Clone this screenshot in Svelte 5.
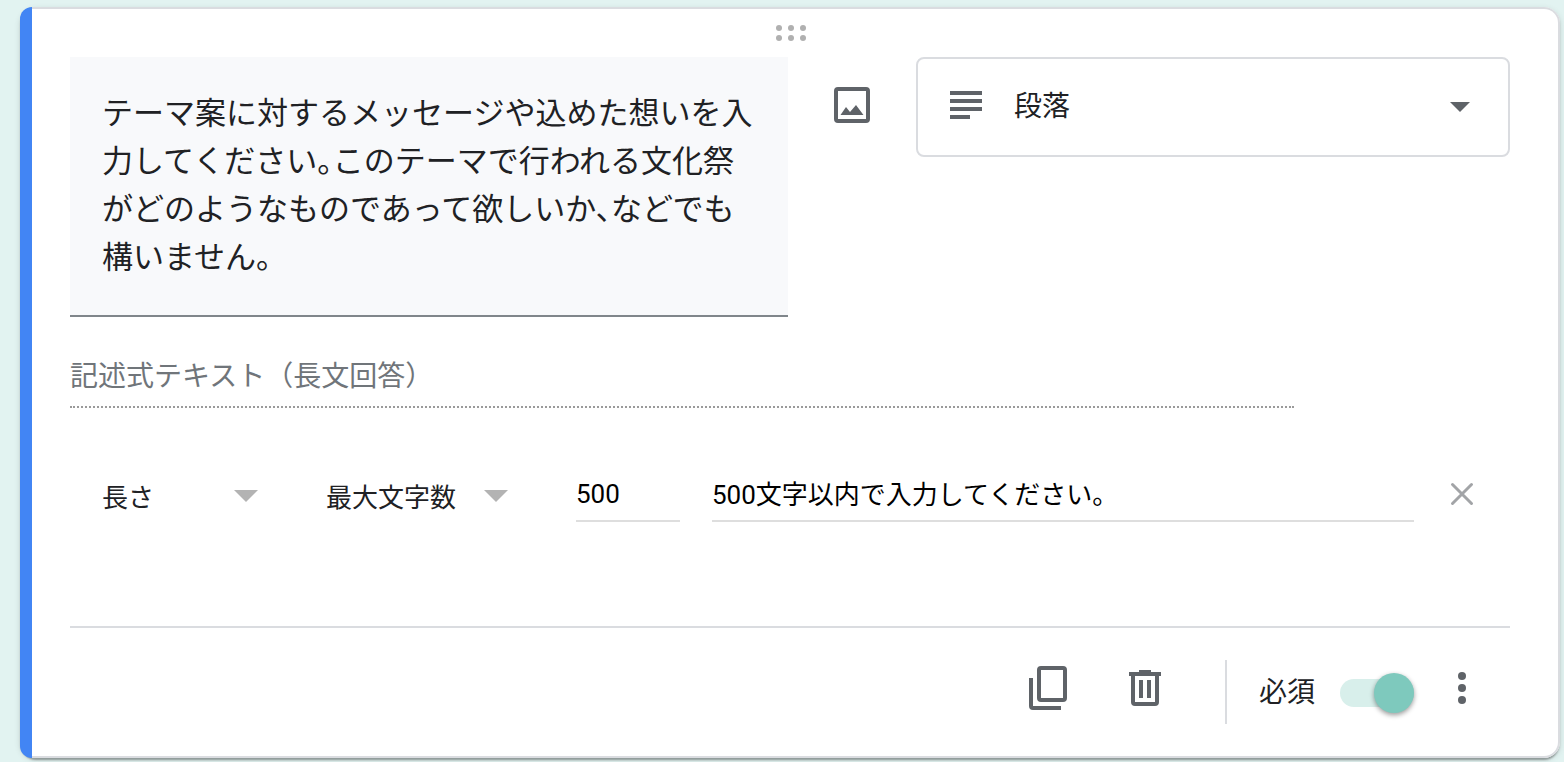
<script>
  let question = $state(
    'テーマ案に対するメッセージや込めた想いを入力してください。このテーマで行われる文化祭がどのようなものであって欲しいか、などでも構いません。'
  );
  let limit = $state('500');
  let errorText = $state('500文字以内で入力してください。');
  let required = $state(true);
</script>

<main>
  <section class="card" aria-label="質問">
    <div class="accent"></div>
    <div class="body">
      <div class="drag">
        <svg width="32" height="16" viewBox="0 0 32 16" fill="#b0b0b0" aria-hidden="true">
          <circle cx="5" cy="3" r="3" /><circle cx="17" cy="3" r="3" /><circle cx="29" cy="3" r="3" />
          <circle cx="5" cy="13" r="3" /><circle cx="17" cy="13" r="3" /><circle cx="29" cy="13" r="3" />
        </svg>
      </div>

      <div class="question-row">
        <textarea class="question" aria-label="質問文" bind:value={question}></textarea>
        <button class="icon-button image-button" aria-label="画像を追加">
          <svg width="48" height="48" viewBox="0 0 48 48" aria-hidden="true">
            <rect x="8" y="8" width="32" height="32" rx="2" fill="none" stroke="#5f6368" stroke-width="4" />
            <path d="M12.500 34 18 26l4 5 6-7 7.500 10z" fill="#5f6368" />
          </svg>
        </button>
        <div class="type">
          <svg class="type-icon" width="32" height="28" viewBox="0 0 32 28" fill="#5f6368" aria-hidden="true">
            <path d="M0 0h32v4H0zM0 8h32v4H0zM0 16h32v4H0zM0 24h20v4H0z" />
          </svg>
          <select aria-label="質問の形式">
            <option>段落</option>
          </select>
          <svg class="caret" width="20" height="10" viewBox="0 0 20 10" aria-hidden="true">
            <path d="M0 0h20L10 10z" fill="#5f6368" />
          </svg>
        </div>
      </div>

      <input class="answer" aria-label="回答" value="記述式テキスト（長文回答）" disabled />

      <div class="validation">
        <div class="picker kind">
          <select aria-label="検証の種類">
            <option>長さ</option>
          </select>
          <svg class="caret" width="24" height="12" viewBox="0 0 24 12" aria-hidden="true">
            <path d="M0 0h24L12 12z" fill="#b3b3b3" />
          </svg>
        </div>
        <div class="picker rule">
          <select aria-label="検証の条件">
            <option>最大文字数</option>
          </select>
          <svg class="caret" width="24" height="12" viewBox="0 0 24 12" aria-hidden="true">
            <path d="M0 0h24L12 12z" fill="#b3b3b3" />
          </svg>
        </div>
        <input class="limit" aria-label="数値" bind:value={limit} />
        <input class="message" aria-label="エラーメッセージ" bind:value={errorText} />
        <button class="icon-button" aria-label="検証を削除">
          <svg width="48" height="48" viewBox="0 0 48 48" aria-hidden="true">
            <path d="M14.500 13.500l19 19M33.500 13.500l-19 19" stroke="#a2a4a7" stroke-width="3" stroke-linecap="round" />
          </svg>
        </button>
      </div>

      <footer>
        <div class="actions">
          <button class="icon-button" aria-label="コピーを作成">
            <svg width="48" height="48" viewBox="0 0 48 48" fill="none" stroke="#5f6368" stroke-width="4" aria-hidden="true">
              <rect x="14" y="4" width="26" height="32" rx="2" />
              <path d="M6 14v28q0 2 2 2h28" />
            </svg>
          </button>
          <button class="icon-button" aria-label="削除">
            <svg width="48" height="48" viewBox="0 0 48 48" fill="#5f6368" aria-hidden="true">
              <path d="M18 6h12v2h10v4H8V8h10zM18 16h4v18h-4zM26 16h4v18h-4z" />
              <path d="M12 11v27q0 2 2 2h20q2 0 2-2V11" fill="none" stroke="#5f6368" stroke-width="4" />
            </svg>
          </button>
        </div>
        <div class="separator"></div>
        <label class="required">
          <span>必須</span>
          <input type="checkbox" role="switch" bind:checked={required} />
        </label>
        <div class="actions">
          <button class="icon-button" aria-label="その他のオプション">
            <svg width="48" height="48" viewBox="0 0 48 48" fill="#5f6368" aria-hidden="true">
              <circle cx="24" cy="12" r="4" /><circle cx="24" cy="24" r="4" /><circle cx="24" cy="36" r="4" />
            </svg>
          </button>
        </div>
      </footer>
    </div>
  </section>
</main>

<style>
  :global(body) {
    background: #e2f3f1;
  }

  main {
    padding: 7px 4px 4px 20px;
    font-family: Roboto, 'Noto Sans CJK JP', sans-serif;
    color: #202124;
  }

  main * {
    box-sizing: border-box;
  }

  .card {
    display: flex;
    border-radius: 16px;
    background: #fff;
    box-shadow:
      0 4px 2px -2px rgba(0, 0, 0, 0.2),
      0 2px 2px 0 rgba(0, 0, 0, 0.14),
      0 2px 6px 0 rgba(0, 0, 0, 0.12);
  }

  .accent {
    flex: none;
    width: 12px;
    border-radius: 16px 0 0 16px;
    background: #4285f4;
  }

  .body {
    flex: 1;
    min-width: 0;
    padding: 0 48px 0 38px;
    border: 2px solid #dadce0;
    border-left: 0;
    border-radius: 0 16px 16px 0;
  }

  textarea,
  input,
  select,
  button {
    margin: 0;
    padding: 0;
    border: 0;
    border-radius: 0;
    outline: 0;
    background: none;
    color: inherit;
    font: inherit;
  }

  svg {
    display: block;
    flex: none;
  }

  .drag {
    display: flex;
    justify-content: center;
    align-items: center;
    height: 48px;
  }

  .question-row {
    display: grid;
    grid-template-columns: 718fr 48px 594fr;
    gap: 40px;
    align-items: start;
  }

  .question {
    display: block;
    width: 100%;
    height: 260px;
    padding: 33px 32px 31px;
    border-bottom: 2px solid #80868b;
    background: #f8f9fb;
    font-size: 31px;
    line-height: 48px;
    font-feature-settings: 'halt';
    resize: none;
    overflow: hidden;
  }

  .icon-button {
    flex: none;
    width: 48px;
    height: 48px;
    cursor: pointer;
  }

  .image-button {
    margin-top: 24px;
  }

  .type {
    display: flex;
    align-items: center;
    gap: 32px;
    height: 100px;
    padding: 0 38px 0 32px;
    border: 2px solid #dadce0;
    border-radius: 8px;
    font-size: 28px;
  }

  .type-icon {
    margin-bottom: 4px;
  }

  select {
    appearance: none;
    line-height: 40px;
  }

  .type select {
    flex: 1;
    min-width: 0;
  }

  .caret {
    pointer-events: none;
  }

  .answer {
    display: block;
    width: 85%;
    height: 54px;
    margin-top: 37px;
    padding-bottom: 12px;
    border-bottom: 2px dotted #9a9a9a;
    color: #70757a;
    font-size: 28px;
    line-height: 40px;
  }

  .validation {
    display: flex;
    align-items: center;
    height: 54px;
    margin-top: 60px;
    padding: 0 24px 0 32px;
    font-size: 26px;
  }

  .picker {
    display: grid;
    align-items: center;
    margin-right: 68px;
    padding-top: 2px;
  }

  .picker select,
  .picker .caret {
    grid-area: 1 / 1;
  }

  .picker select {
    padding-top: 4px;
  }

  .picker .caret {
    justify-self: end;
  }

  .kind {
    width: 156px;
  }

  .rule {
    width: 182px;
  }

  .limit,
  .message {
    height: 54px;
    border-bottom: 2px solid #dedede;
    color: #000;
  }

  .limit {
    width: 104px;
    margin-right: 32px;
  }

  .message {
    flex: 1;
    min-width: 0;
    margin-right: 24px;
    padding-bottom: 4px;
  }

  footer {
    display: flex;
    justify-content: flex-end;
    align-items: center;
    height: 130px;
    margin-top: 104px;
    padding-right: 24px;
    border-top: 2px solid #dadce0;
  }

  .actions {
    display: flex;
    gap: 48px;
    padding-bottom: 8px;
  }

  .separator {
    width: 2px;
    height: 64px;
    margin: 0 32px 0 56px;
    background: #dadce0;
  }

  .required {
    display: flex;
    align-items: center;
    gap: 25px;
    margin-right: 24px;
    padding-top: 2px;
    font-size: 28px;
    line-height: 40px;
  }

  .required input {
    appearance: none;
    display: flex;
    align-items: center;
    width: 74px;
    height: 28px;
    border-radius: 14px;
    background: #dadce0;
    cursor: pointer;
  }

  .required input::before {
    content: '';
    flex: none;
    width: 40px;
    height: 40px;
    border-radius: 50%;
    background: #fafafa;
    box-shadow: 0 2px 5px rgba(0, 0, 0, 0.4);
  }

  .required input:checked {
    justify-content: flex-end;
    background: #d8efeb;
  }

  .required input:checked::before {
    background: #7ec9bd;
  }
</style>
